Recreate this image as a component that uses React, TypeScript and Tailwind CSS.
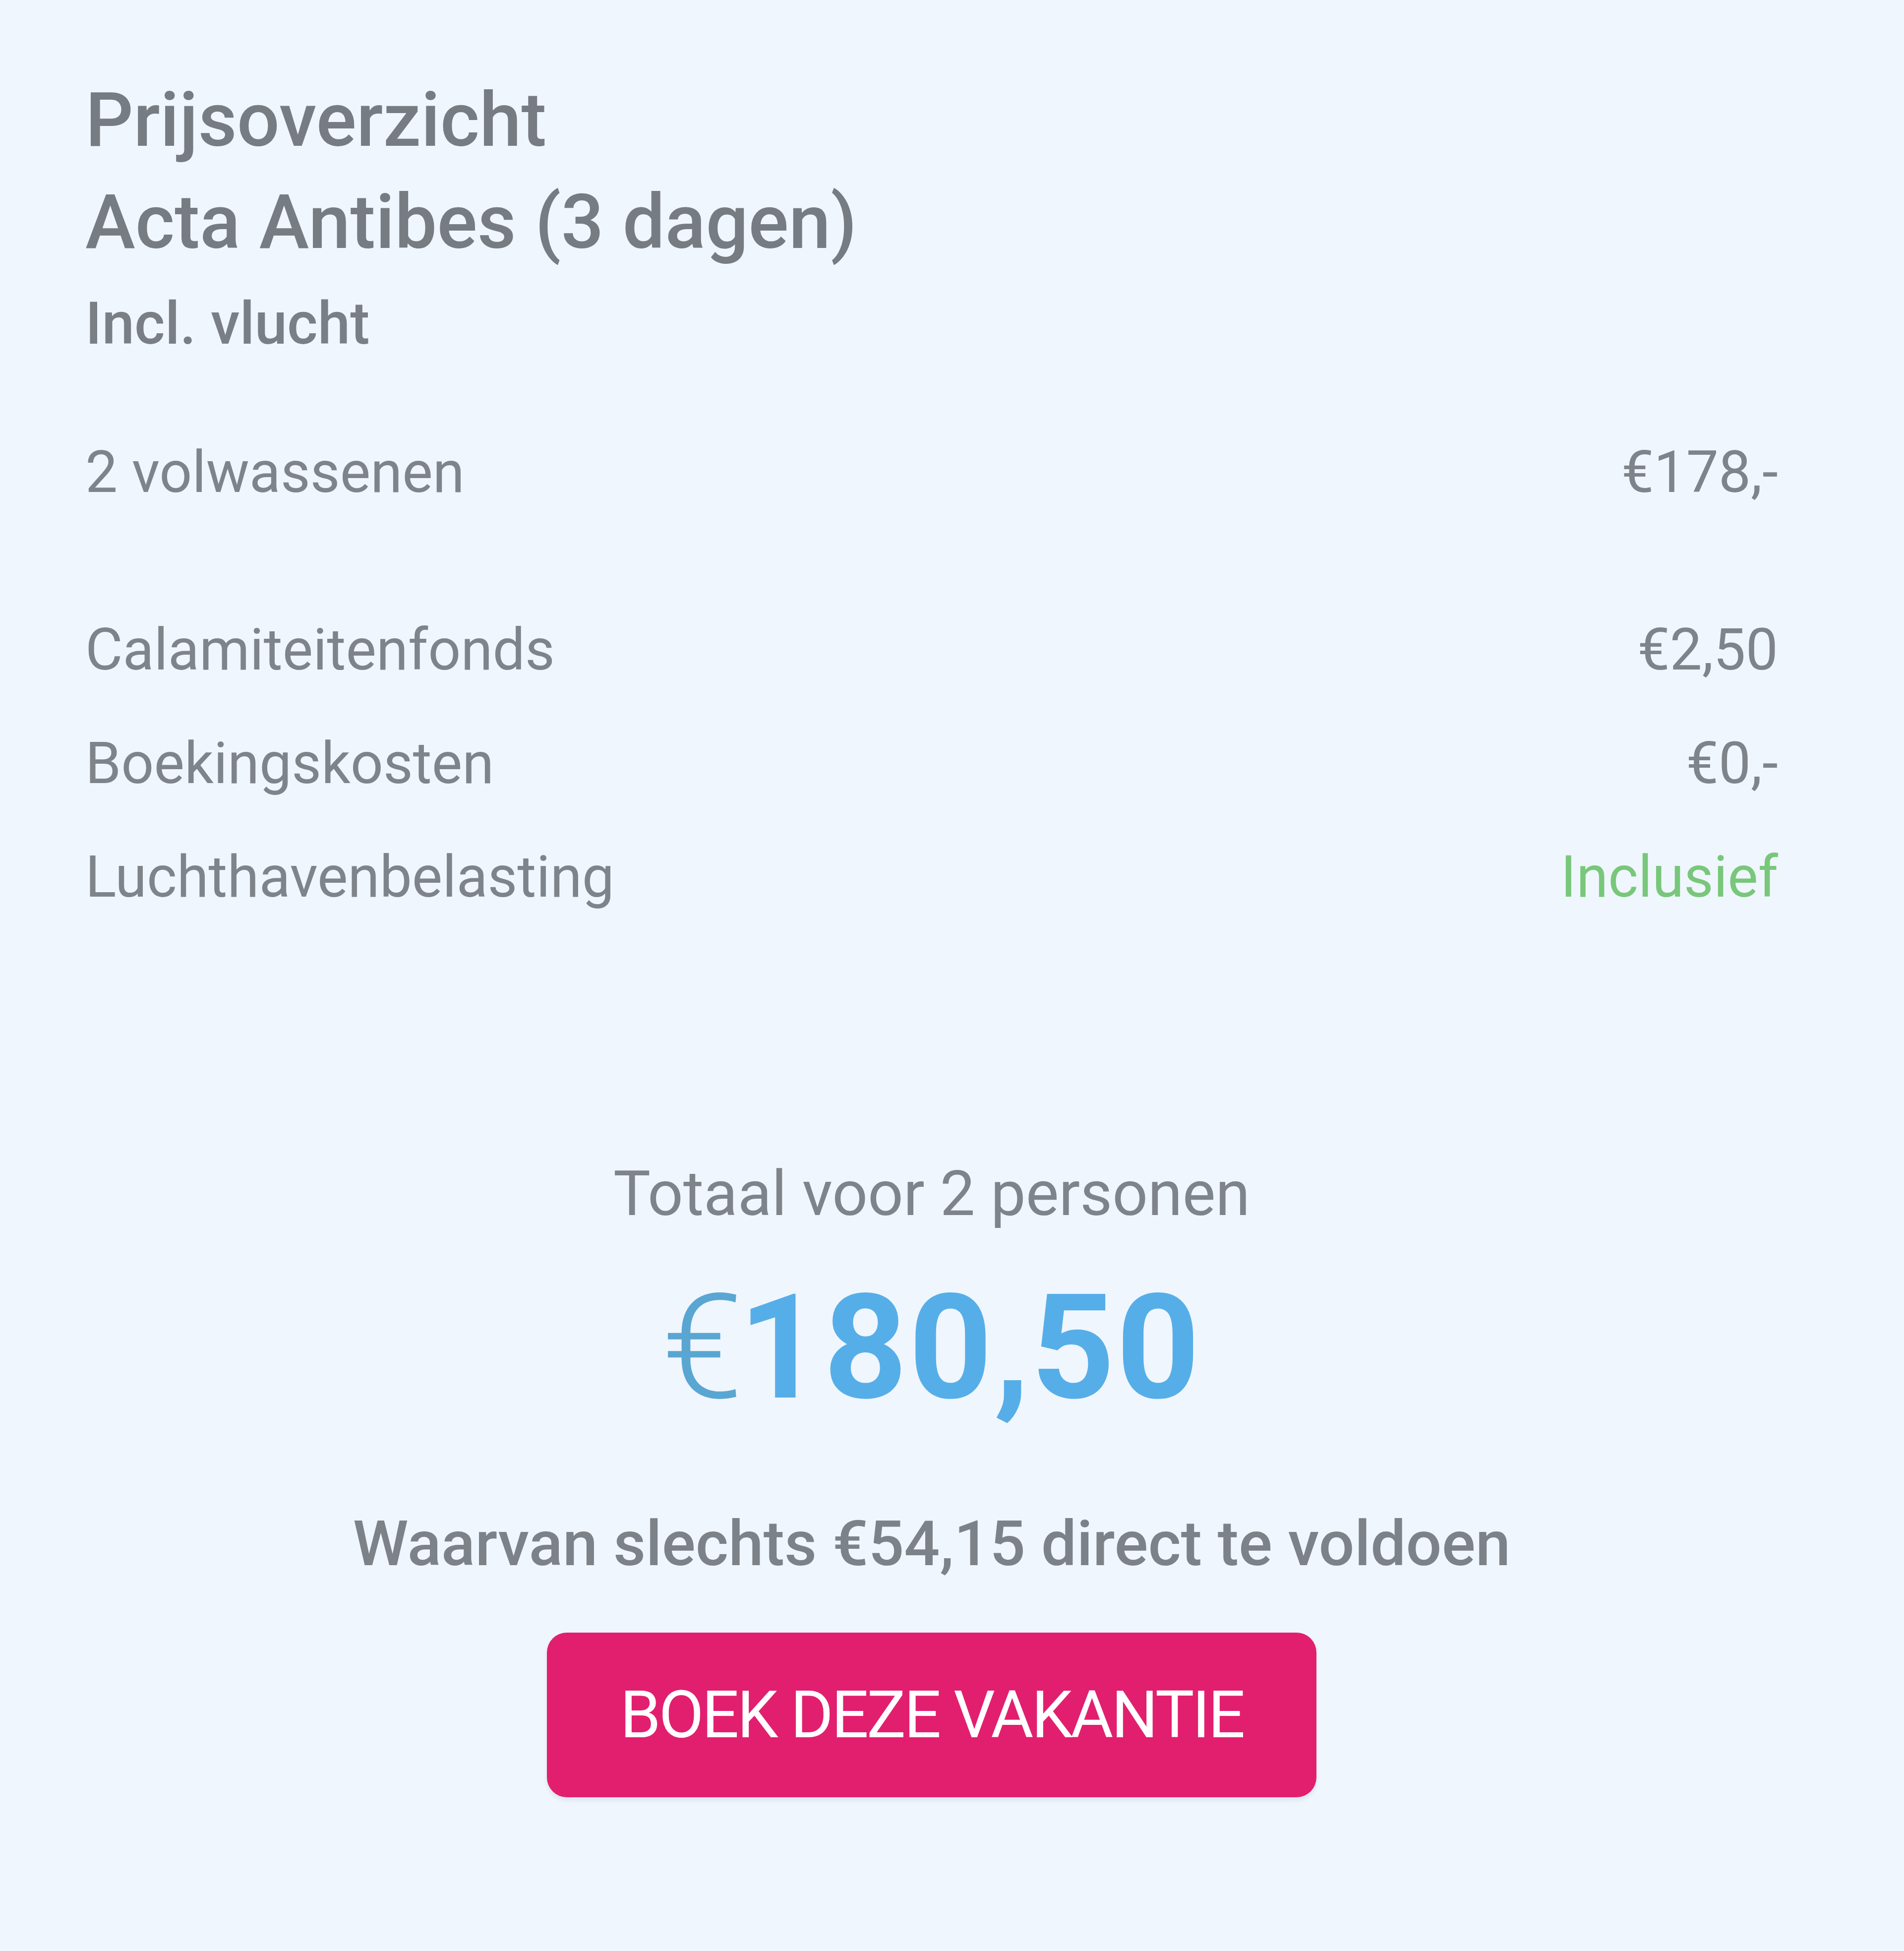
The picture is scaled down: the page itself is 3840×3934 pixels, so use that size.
import React from "react";

const rows = [
  { label: "Calamiteitenfonds", value: "€2,50" },
  { label: "Boekingskosten", value: "€0,-" },
  { label: "Luchthavenbelasting", value: "Inclusief", green: true },
];

export default function App() {
  return (
    <div
      className="min-h-screen bg-[#f0f6fd] pl-[172px] pr-[254px] pt-[139px] pb-[307px] text-[#7f848b]"
      style={{ fontFamily: "Roboto, 'Liberation Sans', sans-serif" }}
    >
      <h1 className="text-[152px] leading-[206px] font-medium text-[#777c83]">
        Prijsoverzicht
        <br />
        Acta Antibes (3 dagen)
      </h1>
      <p className="mt-[32px] text-[118px] leading-[140px] font-medium text-[#7a7f86]">Incl. vlucht</p>

      <div className="mt-[159px] flex justify-between text-[116px] leading-[140px]">
        <span>2 volwassenen</span>
        <span>€178,-</span>
      </div>

      <div className="mt-[218px] flex flex-col gap-[89px] text-[116px] leading-[140px]">
        {rows.map((row) => (
          <div key={row.label} className="flex justify-between">
            <span>{row.label}</span>
            <span className={row.green ? "text-[#78c77a]" : ""}>{row.value}</span>
          </div>
        ))}
      </div>

      <div className="mt-[494px] flex flex-col items-center">
        <p className="text-[126px] leading-[150px]">Totaal voor 2 personen</p>
        <p className="mt-[76px] text-[294px] leading-[320px] font-bold text-[#56aee8] tracking-[0.01em]">
          <span className="font-light text-[#5aa6d2] mr-[-0.04em]">€</span>180,50
        </p>
        <p className="mt-[160px] text-[127px] leading-[150px] font-medium text-[#7d8289]">
          Waarvan slechts €54,15 direct te voldoen
        </p>
        <button className="mt-[104px] h-[332px] w-[1552px] rounded-[40px] bg-[#e21f6f] text-white text-[132px] tracking-[-0.03em] shadow-[0_6px_10px_rgba(0,0,0,0.08)]">
          BOEK DEZE VAKANTIE
        </button>
      </div>
    </div>
  );
}
